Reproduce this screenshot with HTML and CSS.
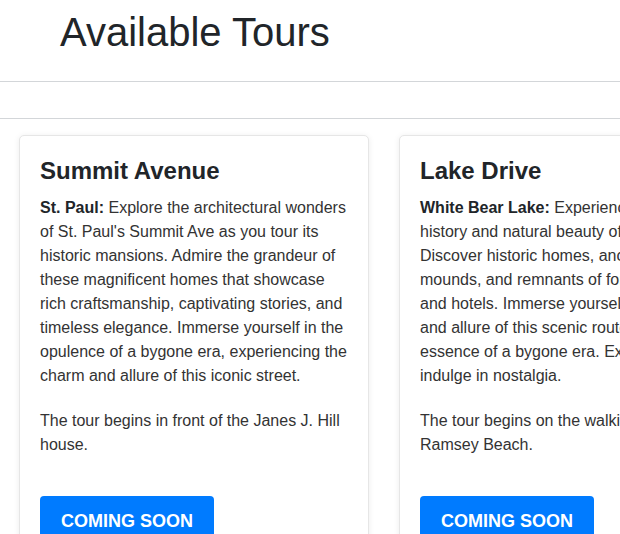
FILE: index.html
```html
<!DOCTYPE html>
<html lang="en">
<head>
<meta charset="utf-8">
<title>Available Tours</title>
<link rel="stylesheet" href="styles.css">
</head>
<body>
<header class="page-header">
  <h1 class="page-title">Available Tours</h1>
</header>
<div class="subbar"></div>
<main class="tours">
  <article class="card">
    <h2 class="card-title">Summit Avenue</h2>
    <p class="card-text"><strong>St. Paul:</strong> Explore the architectural wonders of St. Paul's Summit Ave as you tour its historic mansions. Admire the grandeur of these magnificent homes that showcase rich craftsmanship, captivating stories, and timeless elegance. Immerse yourself in the opulence of a bygone era, experiencing the charm and allure of this iconic street.</p>
    <p class="card-text">The tour begins in front of the Janes J. Hill house.</p>
    <button class="btn">Coming Soon</button>
  </article>
  <article class="card">
    <h2 class="card-title">Lake Drive</h2>
    <p class="card-text"><strong>White Bear Lake:</strong> Experience the rich history and natural beauty of White Bear. Discover historic homes, ancient burial mounds, and remnants of former resorts and hotels. Immerse yourself in the charm and allure of this scenic route and the essence of a bygone era. Explore and indulge in nostalgia.</p>
    <p class="card-text">The tour begins on the walking path at Ramsey Beach.</p>
    <button class="btn">Coming Soon</button>
  </article>
</main>
</body>
</html>
```
FILE: styles.css
```css
html, body {
  margin: 0;
  padding: 0;
  background: #fff;
  color: #212529;
  font-family: "Liberation Sans", Arial, sans-serif;
}
body {
  width: 620px;
  overflow: hidden;
}
.page-header {
  padding-left: 60px;
  border-bottom: 1px solid #d3d6d9;
  box-sizing: border-box;
  height: 82px;
}
.page-title {
  margin: 0;
  padding-top: 8px;
  font-family: "Liberation Sans", Arial, sans-serif;
  font-weight: 400;
  font-size: 40px;
  line-height: 48px;
  color: #212529;
}
.subbar {
  height: 37px;
  border-bottom: 1px solid #d3d6d9;
  box-sizing: border-box;
}
.tours {
  display: flex;
  gap: 30px;
  padding: 16px 0 0 19px;
  width: max-content;
}
.card {
  width: 350px;
  box-sizing: border-box;
  padding: 20px;
  border: 1px solid #e6e6e6;
  border-radius: 5px;
  box-shadow: 0 1px 6px rgba(0,0,0,0.08);
  background: #fff;
}
.card-title {
  margin: 0 0 11px;
  font-size: 24px;
  line-height: 29px;
  font-weight: 700;
  color: #212529;
}
.card-text {
  margin: 0 0 21px;
  font-size: 16px;
  line-height: 24px;
  color: #333;
}
.card-text strong {
  color: #212529;
}
.btn {
  margin-top: 18px;
  display: inline-block;
  background: #007bff;
  color: #fff;
  border: none;
  border-radius: 4px;
  padding: 14px 21px;
  font-family: "Liberation Sans", Arial, sans-serif;
  font-size: 18px;
  font-weight: 700;
  text-transform: uppercase;
  line-height: 22px;
}
```
